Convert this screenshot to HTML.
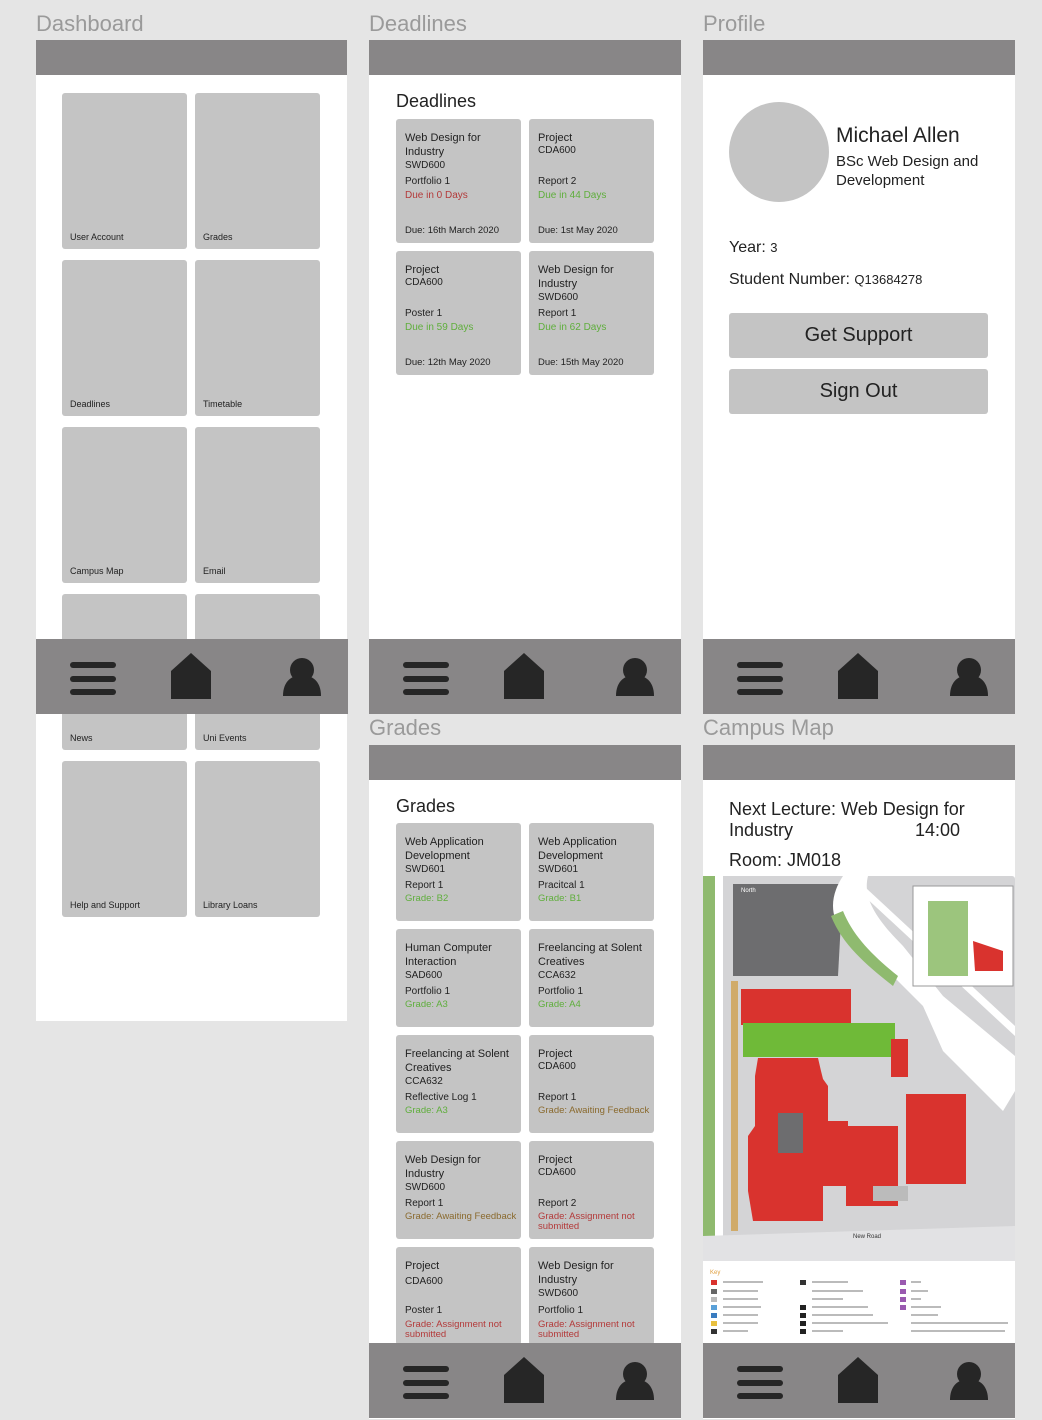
<!DOCTYPE html>
<html><head><meta charset="utf-8"><style>
*{margin:0;padding:0;box-sizing:border-box}
body{width:1042px;height:1420px;background:#e5e5e5;position:relative;overflow:hidden;font-family:"Liberation Sans",sans-serif;color:#222}
.a{position:absolute}
.ft{position:absolute;font-size:22px;color:#9a9a9a;line-height:26px}
.fr{position:absolute;background:#fff;overflow:hidden}
.hd{position:absolute;left:0;top:0;width:100%;height:35px;background:#888687}
.nav{position:absolute;width:312px;height:75px;background:#888687}
.tile{position:absolute;width:125px;height:156px;background:#c4c4c4;border-radius:3px}
.tile span{position:absolute;left:8px;bottom:7px;font-size:9px;color:#222}
.card{position:absolute;width:125px;background:#c4c4c4;border-radius:3px;font-size:11px}
.card div{position:absolute;left:9px;line-height:14px;white-space:nowrap;margin-top:1px}
.c{font-size:10px}
.r{color:#b33a3a;font-size:10px}
.g{color:#5fae3c;font-size:10px}
.br{color:#8a6a2e;font-size:9.5px}
.rs{color:#b33a3a;font-size:9.5px;line-height:10px!important}
.btn{position:absolute;left:26px;width:259px;height:45px;background:#c4c4c4;border-radius:3px;font-size:20px;text-align:center;line-height:45px}
</style></head><body>

<div class="ft" style="left:36px;top:11px">Dashboard</div>
<div class="ft" style="left:369px;top:11px">Deadlines</div>
<div class="ft" style="left:703px;top:11px">Profile</div>
<div class="ft" style="left:369px;top:715px">Grades</div>
<div class="ft" style="left:703px;top:715px">Campus Map</div>

<!-- Dashboard -->
<div class="fr" style="left:36px;top:40px;width:311px;height:981px">
<div class="hd"></div>
<div class="tile" style="left:26px;top:53px"><span>User Account</span></div>
<div class="tile" style="left:159px;top:53px"><span>Grades</span></div>
<div class="tile" style="left:26px;top:220px"><span>Deadlines</span></div>
<div class="tile" style="left:159px;top:220px"><span>Timetable</span></div>
<div class="tile" style="left:26px;top:387px"><span>Campus Map</span></div>
<div class="tile" style="left:159px;top:387px"><span>Email</span></div>
<div class="tile" style="left:26px;top:554px"><span>News</span></div>
<div class="tile" style="left:159px;top:554px"><span>Uni Events</span></div>
<div class="tile" style="left:26px;top:721px"><span>Help and Support</span></div>
<div class="tile" style="left:159px;top:721px"><span>Library Loans</span></div>
</div>

<!-- Deadlines -->
<div class="fr" style="left:369px;top:40px;width:312px;height:674px">
<div class="hd"></div>
<div class="a" style="left:27px;top:51px;font-size:18px">Deadlines</div>
<div class="card" style="left:27px;top:79px;height:124px">
<div style="top:11px">Web Design for</div><div style="top:25px">Industry</div><div class="c" style="top:39px">SWD600</div>
<div class="c" style="top:55px">Portfolio 1</div><div class="r" style="top:69px">Due in 0 Days</div><div class="c" style="top:104px;font-size:9.5px">Due: 16th March 2020</div></div>
<div class="card" style="left:160px;top:79px;height:124px">
<div style="top:11px">Project</div><div class="c" style="top:24px">CDA600</div>
<div class="c" style="top:55px">Report 2</div><div class="g" style="top:69px">Due in 44 Days</div><div class="c" style="top:104px;font-size:9.5px">Due: 1st May 2020</div></div>
<div class="card" style="left:27px;top:211px;height:124px">
<div style="top:11px">Project</div><div class="c" style="top:24px">CDA600</div>
<div class="c" style="top:55px">Poster 1</div><div class="g" style="top:69px">Due in 59 Days</div><div class="c" style="top:104px;font-size:9.5px">Due: 12th May 2020</div></div>
<div class="card" style="left:160px;top:211px;height:124px">
<div style="top:11px">Web Design for</div><div style="top:25px">Industry</div><div class="c" style="top:39px">SWD600</div>
<div class="c" style="top:55px">Report 1</div><div class="g" style="top:69px">Due in 62 Days</div><div class="c" style="top:104px;font-size:9.5px">Due: 15th May 2020</div></div>
</div>

<!-- Profile -->
<div class="fr" style="left:703px;top:40px;width:312px;height:674px">
<div class="hd"></div>
<div class="a" style="left:26px;top:62px;width:100px;height:100px;border-radius:50%;background:#c4c4c4"></div>
<div class="a" style="left:133px;top:84px;font-size:21px">Michael Allen</div>
<div class="a" style="left:133px;top:112px;font-size:15px;line-height:19px">BSc Web Design and<br>Development</div>
<div class="a" style="left:26px;top:199px;font-size:16px">Year: <span style="font-size:13px">3</span></div>
<div class="a" style="left:26px;top:231px;font-size:16px">Student Number: <span style="font-size:13px">Q13684278</span></div>
<div class="btn" style="top:273px">Get Support</div>
<div class="btn" style="top:329px">Sign Out</div>
</div>

<!-- Grades -->
<div class="fr" style="left:369px;top:745px;width:312px;height:674px">
<div class="hd"></div>
<div class="a" style="left:27px;top:51px;font-size:18px">Grades</div>
<div class="card" style="left:27px;top:78px;height:98px">
<div style="top:11px">Web Application</div><div style="top:25px">Development</div><div class="c" style="top:39px">SWD601</div>
<div class="c" style="top:55px">Report 1</div><div class="g" style="top:68px;font-size:9.5px">Grade: B2</div></div>
<div class="card" style="left:160px;top:78px;height:98px">
<div style="top:11px">Web Application</div><div style="top:25px">Development</div><div class="c" style="top:39px">SWD601</div>
<div class="c" style="top:55px">Pracitcal 1</div><div class="g" style="top:68px;font-size:9.5px">Grade: B1</div></div>
<div class="card" style="left:27px;top:184px;height:98px">
<div style="top:11px">Human Computer</div><div style="top:25px">Interaction</div><div class="c" style="top:39px">SAD600</div>
<div class="c" style="top:55px">Portfolio 1</div><div class="g" style="top:68px;font-size:9.5px">Grade: A3</div></div>
<div class="card" style="left:160px;top:184px;height:98px">
<div style="top:11px">Freelancing at Solent</div><div style="top:25px">Creatives</div><div class="c" style="top:39px">CCA632</div>
<div class="c" style="top:55px">Portfolio 1</div><div class="g" style="top:68px;font-size:9.5px">Grade: A4</div></div>
<div class="card" style="left:27px;top:290px;height:98px">
<div style="top:11px">Freelancing at Solent</div><div style="top:25px">Creatives</div><div class="c" style="top:39px">CCA632</div>
<div class="c" style="top:55px">Reflective Log 1</div><div class="g" style="top:68px;font-size:9.5px">Grade: A3</div></div>
<div class="card" style="left:160px;top:290px;height:98px">
<div style="top:11px">Project</div><div class="c" style="top:24px">CDA600</div>
<div class="c" style="top:55px">Report 1</div><div class="br" style="top:68px">Grade: Awaiting Feedback</div></div>
<div class="card" style="left:27px;top:396px;height:98px">
<div style="top:11px">Web Design for</div><div style="top:25px">Industry</div><div class="c" style="top:39px">SWD600</div>
<div class="c" style="top:55px">Report 1</div><div class="br" style="top:68px">Grade: Awaiting Feedback</div></div>
<div class="card" style="left:160px;top:396px;height:98px">
<div style="top:11px">Project</div><div class="c" style="top:24px">CDA600</div>
<div class="c" style="top:55px">Report 2</div><div class="rs" style="top:70px">Grade: Assignment not<br>submitted</div></div>
<div class="card" style="left:27px;top:502px;height:98px">
<div style="top:11px">Project</div><div class="c" style="top:27px">CDA600</div>
<div class="c" style="top:56px">Poster 1</div><div class="rs" style="top:72px">Grade: Assignment not<br>submitted</div></div>
<div class="card" style="left:160px;top:502px;height:98px">
<div style="top:11px">Web Design for</div><div style="top:25px">Industry</div><div class="c" style="top:39px">SWD600</div>
<div class="c" style="top:56px">Portfolio 1</div><div class="rs" style="top:72px">Grade: Assignment not<br>submitted</div></div>
</div>

<!-- Campus Map -->
<div class="fr" style="left:703px;top:745px;width:312px;height:674px">
<div class="hd"></div>
<div class="a" style="left:26px;top:54px;font-size:18px;line-height:21px;width:250px">Next Lecture: Web Design for<br>Industry<span style="position:absolute;left:186px">14:00</span></div>
<div class="a" style="left:26px;top:105px;font-size:18px">Room: JM018</div>
<svg class="a" style="left:0;top:131px" width="312" height="470" viewBox="0 0 312 470">
<rect width="312" height="385" fill="#d4d4d6" rx="3"/>
<rect x="0" y="0" width="12" height="385" fill="#8fba6f"/>
<rect x="12" y="0" width="8" height="385" fill="#fff"/>
<path d="M30 8 L140 8 L135 100 L30 100 Z" fill="#6d6d6f"/>
<path d="M140 0 C120 30 130 60 170 80 L220 130 L240 175 L300 235 L312 215 L312 180 L240 120 L200 70 C170 40 160 20 165 0 Z" fill="#fff"/>
<path d="M150 0 L312 150 L312 160 L145 5 Z" fill="#fff"/>
<path d="M128 40 C140 70 165 90 190 110 L195 100 C170 80 150 60 140 35 Z" fill="#8fba6f"/>
<rect x="210" y="10" width="100" height="100" fill="#fff" stroke="#999"/>
<path d="M225 25 L265 25 L265 100 L225 100 Z" fill="#9cc57d"/>
<path d="M270 65 L300 75 L300 95 L272 95 Z" fill="#d9332e"/>
<path d="M28 105 L35 105 L35 355 L28 355 Z" fill="#d0ab6a"/>
<rect x="38" y="113" width="110" height="36" fill="#d9332e"/>
<rect x="40" y="147" width="152" height="34" fill="#6fba38"/>
<rect x="188" y="163" width="17" height="38" fill="#d9332e"/>
<path d="M55 182 L115 182 L118 195 L120 203 L125 210 L125 245 L145 245 L145 300 L120 305 L120 345 L50 345 L45 315 L45 260 L52 250 L52 200 Z" fill="#d9332e"/>
<rect x="75" y="237" width="25" height="40" fill="#6d6d6f"/>
<rect x="143" y="250" width="52" height="80" fill="#d9332e"/>
<rect x="120" y="270" width="30" height="40" fill="#d9332e"/>
<rect x="203" y="218" width="60" height="90" fill="#d9332e"/>
<path d="M170 325 L205 325 L205 310 L170 310 Z" fill="#bbb"/>
<path d="M0 360 L312 350 L312 385 L0 385 Z" fill="#e2e2e4"/>
<text x="150" y="362" font-size="6" font-family="Liberation Sans" fill="#333">New Road</text>
<text x="38" y="16" font-size="6" font-family="Liberation Sans" fill="#fff">North</text>
<rect x="0" y="387" width="312" height="83" fill="#fff"/>
<text x="7" y="398" font-size="6" font-family="Liberation Sans" fill="#e0a040">Key</text>
<g fill="#d9332e"><rect x="8" y="404" width="6" height="5"/></g>
<g fill="#666"><rect x="8" y="413" width="6" height="5"/><rect x="8" y="421" width="6" height="5" fill="#bbb"/><rect x="8" y="429" width="6" height="5" fill="#5aa0d8"/><rect x="8" y="437" width="6" height="5" fill="#3a7cc0"/><rect x="8" y="445" width="6" height="5" fill="#e8c040"/><rect x="8" y="453" width="6" height="5" fill="#333"/>
<rect x="97" y="404" width="6" height="5" fill="#333"/><rect x="97" y="429" width="6" height="5" fill="#222"/><rect x="97" y="437" width="6" height="5" fill="#222"/><rect x="97" y="445" width="6" height="5" fill="#222"/><rect x="97" y="453" width="6" height="5" fill="#222"/>
<rect x="197" y="404" width="6" height="5" fill="#9a5ab0"/><rect x="197" y="413" width="6" height="5" fill="#9a5ab0"/><rect x="197" y="421" width="6" height="5" fill="#9a5ab0"/><rect x="197" y="429" width="6" height="5" fill="#9a5ab0"/></g>
<g stroke="#bbb" stroke-width="2"><line x1="20" y1="406" x2="60" y2="406"/><line x1="20" y1="415" x2="55" y2="415"/><line x1="20" y1="423" x2="55" y2="423"/><line x1="20" y1="431" x2="58" y2="431"/><line x1="20" y1="439" x2="55" y2="439"/><line x1="20" y1="447" x2="55" y2="447"/><line x1="20" y1="455" x2="45" y2="455"/>
<line x1="109" y1="406" x2="145" y2="406"/><line x1="109" y1="415" x2="160" y2="415"/><line x1="109" y1="423" x2="140" y2="423"/><line x1="109" y1="431" x2="165" y2="431"/><line x1="109" y1="439" x2="170" y2="439"/><line x1="109" y1="447" x2="185" y2="447"/><line x1="109" y1="455" x2="140" y2="455"/>
<line x1="208" y1="406" x2="218" y2="406"/><line x1="208" y1="415" x2="225" y2="415"/><line x1="208" y1="423" x2="218" y2="423"/><line x1="208" y1="431" x2="238" y2="431"/><line x1="208" y1="439" x2="235" y2="439"/><line x1="208" y1="447" x2="305" y2="447"/><line x1="208" y1="455" x2="302" y2="455"/></g>
</svg>
</div>

<!-- Navs -->
<svg width="0" height="0" style="position:absolute"><defs>
<g id="nv">
<rect x="34" y="23" width="46" height="6" rx="3" fill="#262626"/>
<rect x="34" y="37" width="46" height="6" rx="3" fill="#262626"/>
<rect x="34" y="50" width="46" height="6" rx="3" fill="#262626"/>
<path d="M135 32 L155 14 L175 32 L175 60 L135 60 Z" fill="#262626"/>
<circle cx="266" cy="31" r="12" fill="#262626"/>
<path d="M247 57 C247 42 256 36 266 36 C276 36 285 42 285 57 Z" fill="#262626"/>
</g></defs></svg>
<svg class="nav" style="left:36px;top:639px" viewBox="0 0 312 75"><use href="#nv"/></svg>
<svg class="nav" style="left:369px;top:639px" viewBox="0 0 312 75"><use href="#nv"/></svg>
<svg class="nav" style="left:703px;top:639px" viewBox="0 0 312 75"><use href="#nv"/></svg>
<svg class="nav" style="left:369px;top:1343px" viewBox="0 0 312 75"><use href="#nv"/></svg>
<svg class="nav" style="left:703px;top:1343px" viewBox="0 0 312 75"><use href="#nv"/></svg>
</body></html>
